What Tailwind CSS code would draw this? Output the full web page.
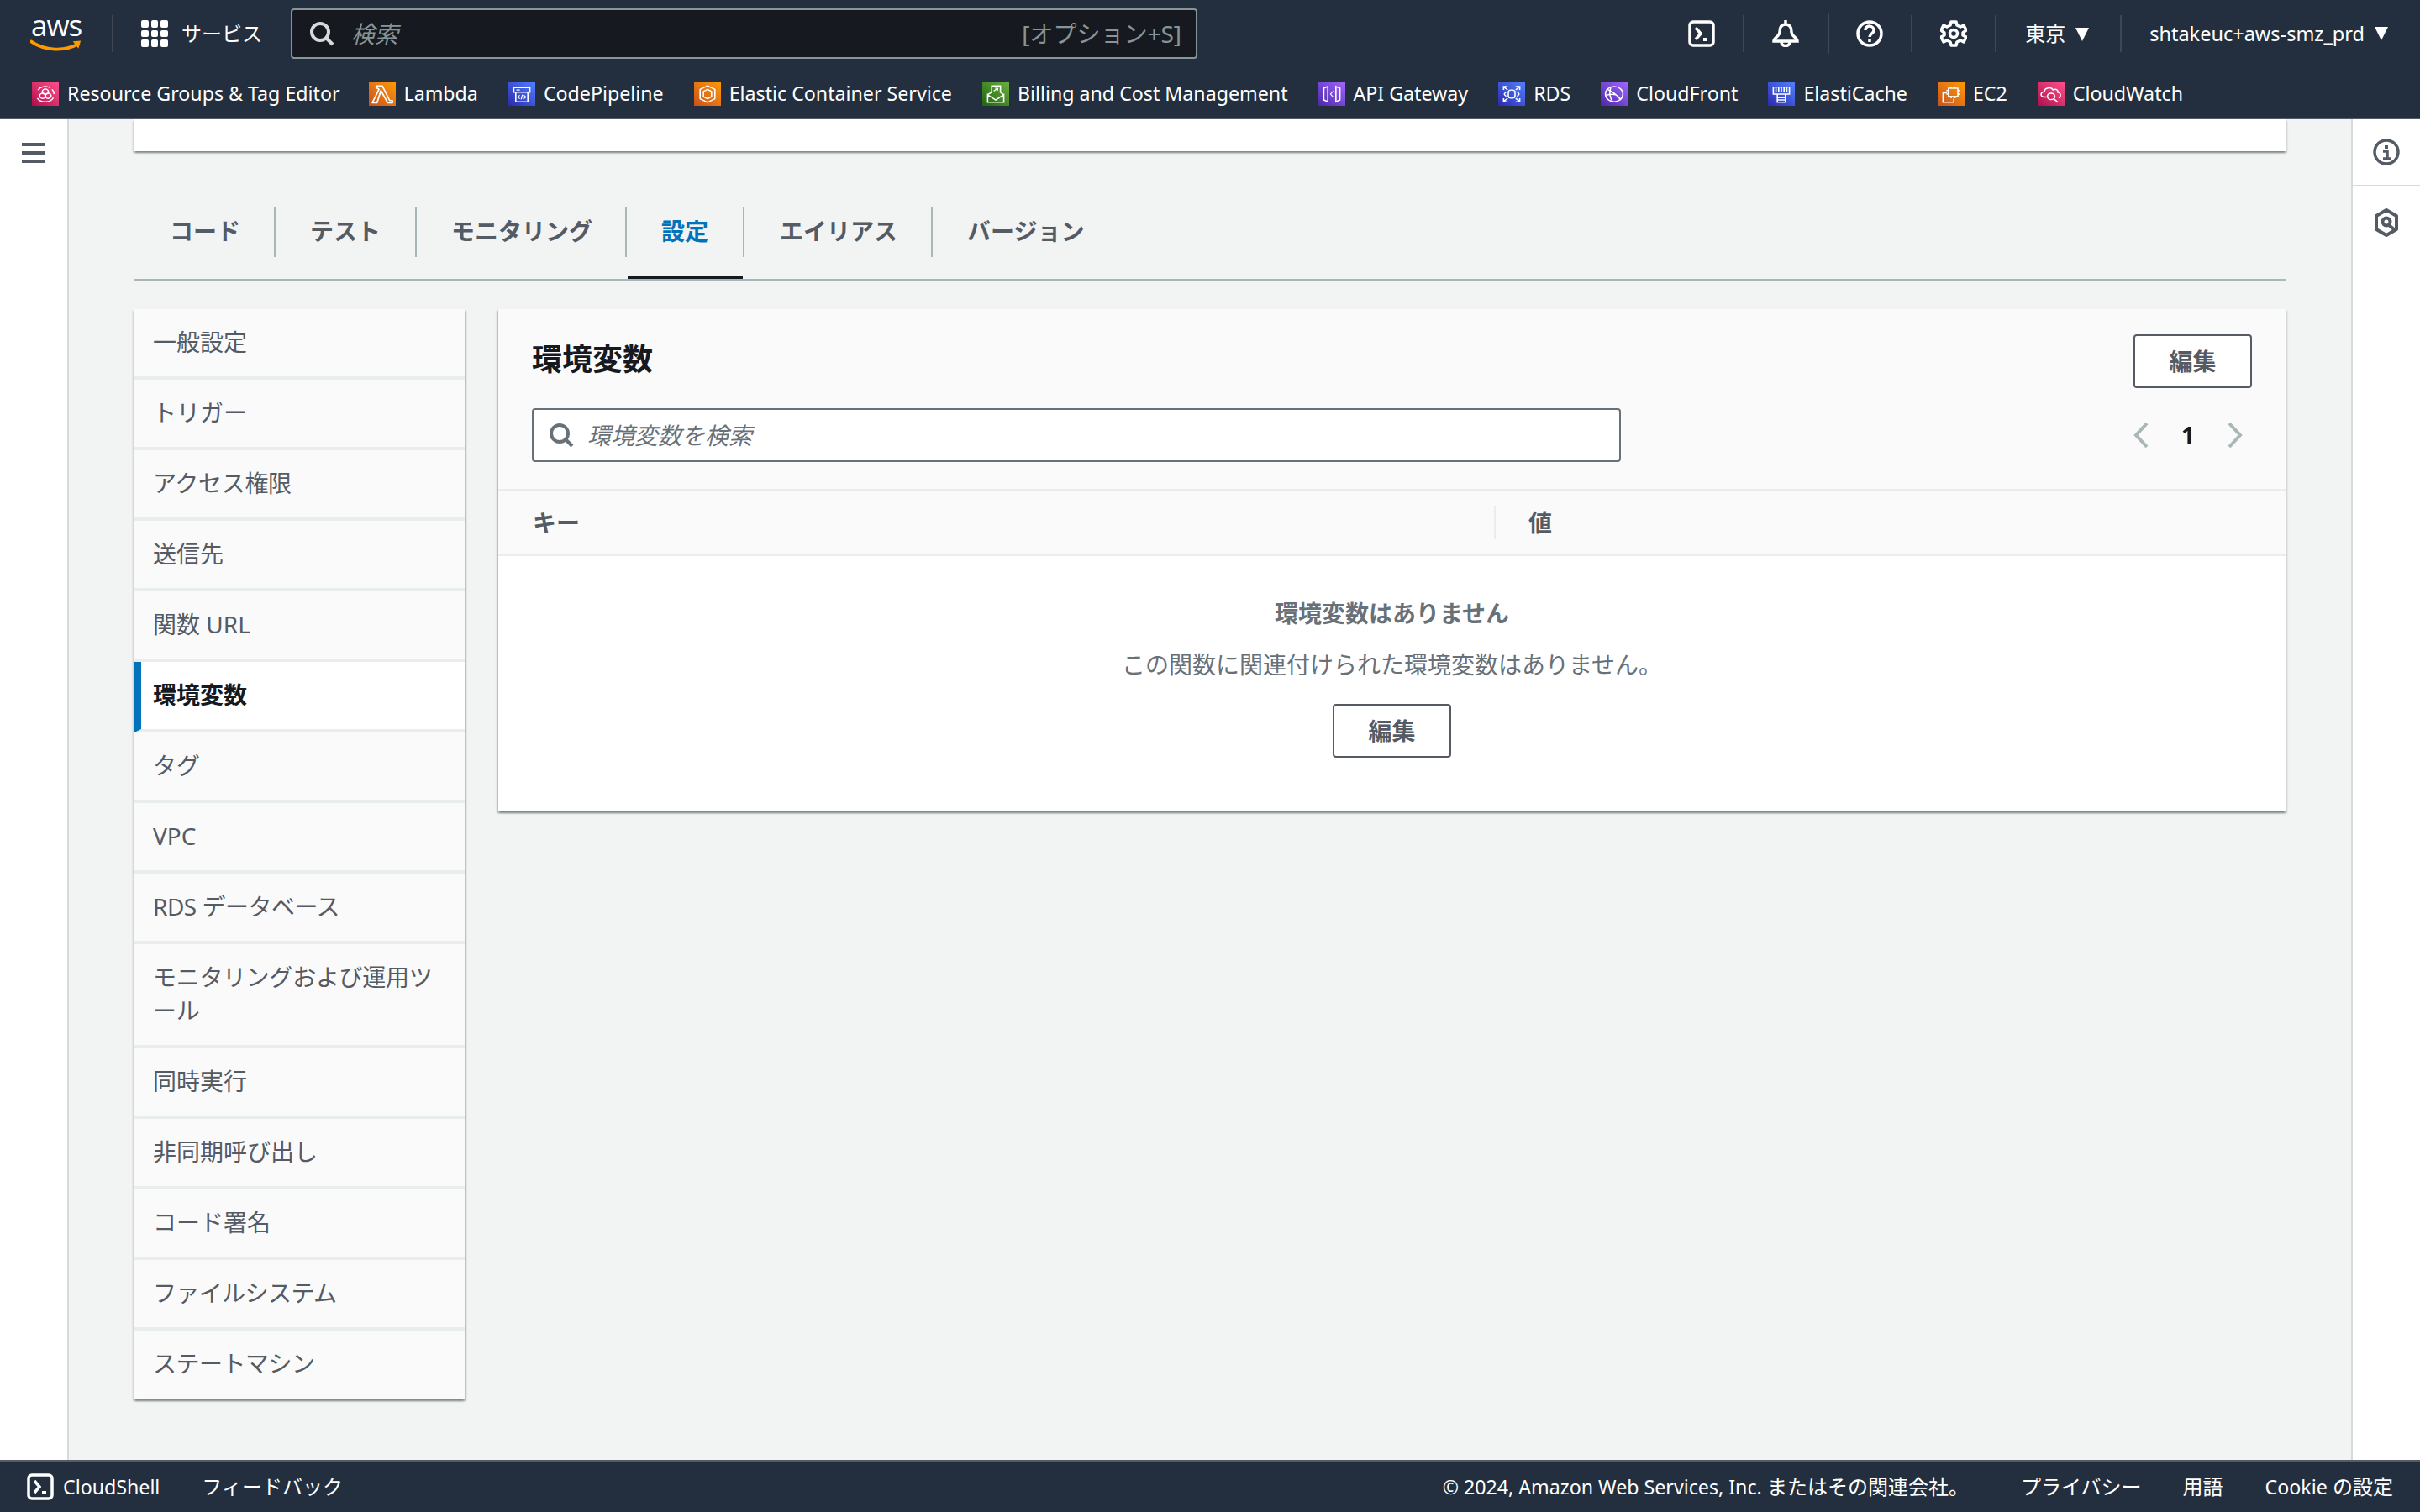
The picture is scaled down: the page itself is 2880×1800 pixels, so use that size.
<!DOCTYPE html>
<html lang="ja">
<head>
<meta charset="utf-8">
<title>Lambda</title>
<script src="https://cdn.jsdelivr.net/npm/@tailwindcss/browser@4"></script>
</head>
<body class="m-0">
<div class="w-[2880px] h-[1800px] overflow-hidden flex flex-col bg-[#f2f3f3] font-['Noto_Sans','Noto_Sans_CJK_JP',sans-serif] text-[28px] leading-[40px] text-[#545b64]">
  <!-- header -->
  <header class="h-[142px] shrink-0 bg-[#232f3e] border-b-2 border-[#545b64] text-white text-[24px]">
    <div class="h-[80px] flex items-center">
      <div class="w-[133px] shrink-0 pl-[37px] relative h-[44px]">
        <span class="block font-['Open_Sans',sans-serif] text-[35px] leading-[32px] tracking-[-1px] -mt-[4px]">aws</span>
        <svg class="absolute left-[36px] top-[28px]" width="62" height="18" viewBox="0 0 66 18" fill="none"><path d="M1 3C18 15 44 16 61 6" stroke="#ff9900" stroke-width="4" stroke-linecap="round"/><path d="M54 3L64 2L61 12" fill="#ff9900"/></svg>
      </div>
      <div class="w-[2px] h-[44px] bg-[#414750]"></div>
      <div class="w-[33px]"></div>
      <div class="grid grid-cols-3 gap-[3px] w-[32px] h-[32px] shrink-0">
        <span class="bg-white rounded-[2px]"></span><span class="bg-white rounded-[2px]"></span><span class="bg-white rounded-[2px]"></span>
        <span class="bg-white rounded-[2px]"></span><span class="bg-white rounded-[2px]"></span><span class="bg-white rounded-[2px]"></span>
        <span class="bg-white rounded-[2px]"></span><span class="bg-white rounded-[2px]"></span><span class="bg-white rounded-[2px]"></span>
      </div>
      <span class="ml-[16px] w-[130px] shrink-0">サービス</span>
      <div class="w-[1079px] h-[60px] shrink-0 bg-[#16191f] border-2 border-[#879596] rounded-[4px] flex items-center pl-[20px] pr-[17px]">
        <svg width="30" height="30" viewBox="0 0 30 30" fill="none" stroke="#d5dbdb" stroke-width="4"><circle cx="13" cy="13" r="10"/><path d="M20 20L28 28"/></svg>
        <span class="ml-[20px] italic text-[#879596] text-[28px]">検索</span>
        <span class="ml-auto text-[#879596] text-[28px]">[オプション+S]</span>
      </div>
      <div class="flex-1"></div>
      <svg class="shrink-0" width="32" height="32" viewBox="0 0 32 32" fill="none" stroke="#fff" stroke-width="3.500"><rect x="2" y="2" width="28" height="28" rx="4"/><path d="M9 9L15 16L9 23"/><path d="M18 23H23" stroke-width="4"/></svg>
      <div class="w-[2px] h-[44px] bg-[#414750] ml-[33px] mr-[33px]"></div>
      <svg class="shrink-0" width="32" height="32" viewBox="0 0 32 32" fill="none" stroke="#fff" stroke-width="3.500"><path d="M16 0V5M16 5C10 5 9 10 9 14C9 19 2 21 2 25H30C30 21 23 19 23 14C23 10 22 5 16 5Z"/><path d="M11 26C11 32 21 32 21 26"/></svg>
      <div class="w-[2px] h-[48px] bg-[#414750] ml-[34px] mr-[32px]"></div>
      <svg class="shrink-0" width="32" height="32" viewBox="0 0 32 32" fill="none" stroke="#fff" stroke-width="3.500"><circle cx="16" cy="16" r="14"/><path d="M11 12C11 5 21 6 21 12C21 16 16 16 16 20"/><path d="M16 22V26" stroke-width="3.500"/></svg>
      <div class="w-[2px] h-[44px] bg-[#414750] ml-[33px] mr-[33px]"></div>
      <svg class="shrink-0" width="32" height="32" viewBox="0 0 32 32" fill="none" stroke="#fff" stroke-width="3.500"><path d="M13 2H19L20 6L24 8L28 6L31 12L27 15V18L31 20L28 26L24 24L20 26L19 30H13L12 26L8 24L4 26L1 20L5 18V15L1 12L4 6L8 8L12 6Z" stroke-linejoin="round"/><circle cx="16" cy="16" r="4.500"/></svg>
      <div class="w-[2px] h-[44px] bg-[#414750] ml-[33px] mr-[34px]"></div>
      <span class="w-[48px] shrink-0">東京</span>
      <svg class="ml-[12px] shrink-0" width="16" height="22" viewBox="0 0 16 22" fill="#fff"><path d="M0 4H16L8 20Z"/></svg>
      <div class="w-[2px] h-[44px] bg-[#414750] ml-[37px] mr-[33px]"></div>
      <span class="shrink-0 text-[23.500px]">shtakeuc+aws-smz_prd</span>
      <svg class="ml-[12px] mr-[38px] shrink-0" width="16" height="22" viewBox="0 0 16 22" fill="#fff"><path d="M0 3H16L8 19Z"/></svg>
    </div>
    <div class="h-[60px] flex items-center pl-[38px] pt-[4px] whitespace-nowrap text-[23.2px]">
      <div class="flex items-center gap-[10px] mr-[34px]">
        <span class="w-[32px] h-[28px] flex bg-linear-to-tr from-[#b0084d] to-[#ff4f8b]"><svg class="w-full h-full" viewBox="0 0 40 40" preserveAspectRatio="none" fill="none" stroke="#fff" stroke-width="2"><path d="M27 9A13 13 0 0 0 9 13M8 27A13 13 0 0 0 20 33A13 13 0 0 0 32 26M33 20A13 13 0 0 0 30 12"/><circle cx="20" cy="16" r="4.500"/><circle cx="16" cy="23" r="4.500"/><circle cx="24" cy="23" r="4.500"/></svg></span>
        <span class="mb-[3px]">Resource Groups &amp; Tag Editor</span>
      </div>
      <div class="flex items-center gap-[10px] mr-[36px]">
        <span class="w-[32px] h-[28px] flex bg-linear-to-tr from-[#c8511b] to-[#ff9900]"><svg class="w-full h-full" viewBox="0 0 40 40" preserveAspectRatio="none" fill="none" stroke="#fff" stroke-width="2.200" stroke-linejoin="round"><path d="M11 6H20L31 31H35V35H28L18 14L12 35H5L15 12L13 10H11Z"/></svg></span>
        <span class="mb-[3px]">Lambda</span>
      </div>
      <div class="flex items-center gap-[10px] mr-[36px]">
        <span class="w-[32px] h-[28px] flex bg-linear-to-tr from-[#2e27ad] to-[#527fff]"><svg class="w-full h-full" viewBox="0 0 40 40" preserveAspectRatio="none" fill="none" stroke="#fff" stroke-width="2"><path d="M8 9H32V17H8ZM11 17V33H29V17"/><path d="M12 13H18" stroke-dasharray="2 1"/><path d="M17 22L14 25L17 28M23 22L26 25L23 28M21 21L19 29" stroke-width="1.500"/></svg></span>
        <span class="mb-[3px]">CodePipeline</span>
      </div>
      <div class="flex items-center gap-[10px] mr-[36px]">
        <span class="w-[32px] h-[28px] flex bg-linear-to-tr from-[#c8511b] to-[#ff9900]"><svg class="w-full h-full" viewBox="0 0 40 40" preserveAspectRatio="none" fill="none" stroke="#fff" stroke-width="2" stroke-linejoin="round"><path d="M20 6L31 12V28L20 34L9 28V12Z"/><path d="M20 12L26 15.500V24.500L20 28L14 24.500V15.500Z"/></svg></span>
        <span class="mb-[3px]">Elastic Container Service</span>
      </div>
      <div class="flex items-center gap-[10px] mr-[36px]">
        <span class="w-[32px] h-[28px] flex bg-linear-to-tr from-[#1b660f] to-[#6cae3e]"><svg class="w-full h-full" viewBox="0 0 40 40" preserveAspectRatio="none" fill="none" stroke="#fff" stroke-width="2"><path d="M14 18V6H27V18M8 21L20 30L32 21V34H8ZM8 21L14 17M32 21L27 17"/><path d="M17 15L23 10M19 10H23V14" stroke-width="1.500"/></svg></span>
        <span class="mb-[3px]">Billing and Cost Management</span>
      </div>
      <div class="flex items-center gap-[10px] mr-[36px]">
        <span class="w-[32px] h-[28px] flex bg-linear-to-tr from-[#4d27a8] to-[#a166ff]"><svg class="w-full h-full" viewBox="0 0 40 40" preserveAspectRatio="none" fill="none" stroke="#fff" stroke-width="2"><path d="M8 10L14 7V33L8 30ZM32 10L26 7V33L32 30Z"/><path d="M22 15L18 20L22 25" stroke-width="1.500"/></svg></span>
        <span class="mb-[3px]">API Gateway</span>
      </div>
      <div class="flex items-center gap-[10px] mr-[36px]">
        <span class="w-[32px] h-[28px] flex bg-linear-to-tr from-[#2e27ad] to-[#527fff]"><svg class="w-full h-full" viewBox="0 0 40 40" preserveAspectRatio="none" fill="none" stroke="#fff" stroke-width="2"><path d="M8 13V7H14M8 7L14 13M32 13V7H26M32 7L26 13M8 27V33H14M8 33L14 27M32 27V33H26M32 33L26 27"/><rect x="15" y="13" width="10" height="14" rx="4"/><path d="M12 16C8 20 8 20 12 24M28 16C32 20 32 20 28 24"/></svg></span>
        <span class="mb-[3px]">RDS</span>
      </div>
      <div class="flex items-center gap-[10px] mr-[36px]">
        <span class="w-[32px] h-[28px] flex bg-linear-to-tr from-[#4d27a8] to-[#a166ff]"><svg class="w-full h-full" viewBox="0 0 40 40" preserveAspectRatio="none" fill="none" stroke="#fff" stroke-width="2"><circle cx="20" cy="20" r="13"/><path d="M10 12C18 16 26 24 30 30M15 8C12 18 14 28 18 33M8 22C14 20 18 20 22 21"/></svg></span>
        <span class="mb-[3px]">CloudFront</span>
      </div>
      <div class="flex items-center gap-[10px] mr-[36px]">
        <span class="w-[32px] h-[28px] flex bg-linear-to-tr from-[#2e27ad] to-[#527fff]"><svg class="w-full h-full" viewBox="0 0 40 40" preserveAspectRatio="none" fill="none" stroke="#fff" stroke-width="2"><path d="M8 8H32V20H8ZM12 8V16M16 8V16M20 8V16M24 8V16M28 8V16"/><path d="M14 20V26H26V20M14 26H26V30H14ZM14 30V34H26V30" /></svg></span>
        <span class="mb-[3px]">ElastiCache</span>
      </div>
      <div class="flex items-center gap-[10px] mr-[36px]">
        <span class="w-[32px] h-[28px] flex bg-linear-to-tr from-[#c8511b] to-[#ff9900]"><svg class="w-full h-full" viewBox="0 0 40 40" preserveAspectRatio="none" fill="none" stroke="#fff" stroke-width="2"><rect x="16" y="10" width="14" height="14"/><path d="M20 7V10M26 7V10M20 24V27M26 24V27M13 14H16M13 20H16M30 14H33M30 20H33"/><path d="M14 18H8V34H24V28"/></svg></span>
        <span class="mb-[3px]">EC2</span>
      </div>
      <div class="flex items-center gap-[10px]">
        <span class="w-[32px] h-[28px] flex bg-linear-to-tr from-[#b0084d] to-[#ff4f8b]"><svg class="w-full h-full" viewBox="0 0 40 40" preserveAspectRatio="none" fill="none" stroke="#fff" stroke-width="2"><path d="M13 25H10C3 25 4 16 10 16C10 9 20 7 23 13C28 10 31 14 30 17C35 18 35 25 31 26"/><circle cx="20" cy="24" r="5.500"/><path d="M24 28L30 34"/></svg></span>
        <span class="mb-[3px]">CloudWatch</span>
      </div>
    </div>
  </header>

  <!-- body -->
  <div class="flex-1 min-h-0 flex">
    <aside class="w-[82px] shrink-0 bg-white border-r-2 border-[#d5dbdb] pt-[28px] pl-[26px]">
      <svg width="28" height="24" viewBox="0 0 28 24" fill="#545b64"><rect width="28" height="4"/><rect y="10" width="28" height="4"/><rect y="20" width="28" height="4"/></svg>
    </aside>

    <main class="flex-1 min-w-0 px-[78px] flex flex-col">
      <div class="h-[38px] shrink-0 bg-white shadow-[0_2px_2px_0_rgba(0,28,36,0.3),2px_2px_2px_0_rgba(0,28,36,0.15),-2px_2px_2px_0_rgba(0,28,36,0.15)]"></div>

      <nav class="mt-[66px] h-[88px] shrink-0 border-b-2 border-[#aab7b8] flex font-bold">
        <div><div class="h-[60px] pl-[42px] pr-[40px] pb-[3px] flex items-center">コード</div></div>
        <div><div class="h-[60px] border-l-2 border-[#aab7b8] px-[41px] pb-[3px] flex items-center">テスト</div></div>
        <div><div class="h-[60px] border-l-2 border-[#aab7b8] pl-[41px] pr-[39px] pb-[3px] flex items-center">モニタリング</div></div>
        <div><div class="h-[60px] border-l-2 border-[#aab7b8] px-[41px] pb-[3px] flex items-center text-[#0073bb]">設定</div><div class="mt-[22px] h-[4px] ml-[3px] bg-[#16191f]"></div></div>
        <div><div class="h-[60px] border-l-2 border-[#aab7b8] pl-[42px] pr-[40px] pb-[3px] flex items-center">エイリアス</div></div>
        <div><div class="h-[60px] border-l-2 border-[#aab7b8] px-[41px] pb-[3px] flex items-center">バージョン</div></div>
      </nav>

      <div class="mt-[34px] flex gap-[40px] items-start">
        <ul class="w-[393px] shrink-0 bg-[#fafafa] shadow-[0_2px_2px_0_rgba(0,28,36,0.3),2px_2px_2px_0_rgba(0,28,36,0.15),-2px_2px_2px_0_rgba(0,28,36,0.15)]">
          <li class="px-[22px] pt-[19px] pb-[21px] border-b-4 border-[#eaeded]">一般設定</li>
          <li class="px-[22px] pt-[19px] pb-[21px] border-b-4 border-[#eaeded]">トリガー</li>
          <li class="px-[22px] pt-[19px] pb-[21px] border-b-4 border-[#eaeded] tracking-[-0.3px]">アクセス権限</li>
          <li class="px-[22px] pt-[19px] pb-[21px] border-b-4 border-[#eaeded]">送信先</li>
          <li class="px-[22px] pt-[19px] pb-[21px] border-b-4 border-[#eaeded]">関数 URL</li>
          <li class="pl-[14px] pr-[22px] pt-[19px] pb-[21px] border-l-8 border-l-[#0073bb] border-b-4 border-b-[#eaeded] bg-white font-bold text-[#16191f]">環境変数</li>
          <li class="px-[22px] pt-[19px] pb-[21px] border-b-4 border-[#eaeded]">タグ</li>
          <li class="px-[22px] pt-[19px] pb-[21px] border-b-4 border-[#eaeded]">VPC</li>
          <li class="px-[22px] pt-[19px] pb-[21px] border-b-4 border-[#eaeded] tracking-[-0.5px]">RDS データベース</li>
          <li class="px-[22px] pt-[19px] pb-[21px] border-b-4 border-[#eaeded] tracking-[-0.3px]">モニタリングおよび運用ツール</li>
          <li class="px-[22px] pt-[19px] pb-[21px] border-b-4 border-[#eaeded]">同時実行</li>
          <li class="px-[22px] pt-[19px] pb-[21px] border-b-4 border-[#eaeded]">非同期呼び出し</li>
          <li class="px-[22px] pt-[19px] pb-[21px] border-b-4 border-[#eaeded]">コード署名</li>
          <li class="px-[22px] pt-[19px] pb-[21px] border-b-4 border-[#eaeded] tracking-[-0.6px]">ファイルシステム</li>
          <li class="px-[22px] pt-[19px] pb-[23px] tracking-[-0.5px]">ステートマシン</li>
        </ul>

        <section class="flex-1 min-w-0 bg-white shadow-[0_2px_2px_0_rgba(0,28,36,0.3),2px_2px_2px_0_rgba(0,28,36,0.15),-2px_2px_2px_0_rgba(0,28,36,0.15)]">
          <div class="h-[216px] bg-[#fafafa] border-b-2 border-[#eaeded] px-[40px] pt-[30px] flex flex-col">
            <div class="flex items-center justify-between h-[64px]">
              <h2 class="text-[36px] leading-[44px] font-bold text-[#16191f] mb-[4px]">環境変数</h2>
              <button class="w-[141px] h-[64px] bg-white border-2 border-[#545b64] rounded-[4px] font-bold">編集</button>
            </div>
            <div class="mt-[24px] flex items-center justify-between">
              <div class="w-[1296px] h-[64px] bg-white border-2 border-[#687078] rounded-[4px] flex items-center pl-[18px]">
                <svg width="30" height="30" viewBox="0 0 30 30" fill="none" stroke="#687078" stroke-width="4"><circle cx="13" cy="13" r="10"/><path d="M20 20L28 28"/></svg>
                <span class="ml-[16px] italic text-[#687078]">環境変数を検索</span>
              </div>
              <div class="flex items-center w-[132px] justify-between text-[#16191f] font-bold mr-[10px]">
                <svg width="20" height="32" viewBox="0 0 20 32" fill="none" stroke="#aab7b8" stroke-width="4"><path d="M17 2L4 16L17 30"/></svg>
                <span>1</span>
                <svg width="20" height="32" viewBox="0 0 20 32" fill="none" stroke="#aab7b8" stroke-width="4"><path d="M3 2L16 16L3 30"/></svg>
              </div>
            </div>
          </div>
          <div class="h-[78px] bg-[#fafafa] border-b-2 border-[#eaeded] flex items-center font-bold">
            <div class="w-[1185px] pl-[41px]">キー</div>
            <div class="w-[2px] h-[40px] bg-[#eaeded]"></div>
            <div class="pl-[39px]">値</div>
          </div>
          <div class="h-[304px] flex flex-col items-center pt-[48px] text-[#687078]">
            <div class="font-bold leading-[40px]">環境変数はありません</div>
            <div class="mt-[21px] leading-[40px]">この関数に関連付けられた環境変数はありません。</div>
            <button class="mt-[27px] w-[141px] h-[64px] bg-white border-2 border-[#545b64] rounded-[4px] font-bold text-[#545b64]">編集</button>
          </div>
        </section>
      </div>
    </main>

    <aside class="w-[82px] shrink-0 bg-white border-l-2 border-[#d5dbdb] flex flex-col">
      <div class="h-[80px] border-b-2 border-[#d5dbdb] flex items-center justify-center">
        <svg width="32" height="32" viewBox="0 0 32 32" fill="none" stroke="#545b64" stroke-width="3.500"><circle cx="16" cy="16" r="14"/><path d="M16 8V12" stroke-width="4"/><path d="M12 15H17V23M12 24H21" stroke-width="3.500"/></svg>
      </div>
      <div class="h-[86px] flex items-center justify-center">
        <svg width="28" height="34" viewBox="0 0 28 34" fill="none" stroke="#545b64" stroke-width="4"><path d="M14 2L26 9V25L14 32L2 25V9Z" stroke-linejoin="round"/><circle cx="14" cy="16" r="4.500"/><path d="M17 20L23 25"/></svg>
      </div>
    </aside>
  </div>

  <!-- footer -->
  <footer class="h-[62px] shrink-0 bg-[#232f3e] border-t-2 border-[#545b64] text-white text-[24px] flex items-center pl-[32px] pr-[32px] whitespace-nowrap">
    <svg class="shrink-0" width="32" height="32" viewBox="0 0 32 32" fill="none" stroke="#fff" stroke-width="3.500"><rect x="2" y="2" width="28" height="28" rx="4"/><path d="M9 9L15 16L9 23"/><path d="M18 23H23" stroke-width="4"/></svg>
    <span class="ml-[11px] text-[23.2px]">CloudShell</span>
    <span class="ml-[50px]">フィードバック</span>
    <span class="ml-auto"><span class="text-[23.2px]">© 2024, Amazon Web Services, Inc.</span> またはその関連会社。</span>
    <span class="ml-[62px]">プライバシー</span>
    <span class="ml-[49px]">用語</span>
    <span class="ml-[50px]"><span class="text-[23.2px]">Cookie</span> の設定</span>
  </footer>
</div>
</body>
</html>
